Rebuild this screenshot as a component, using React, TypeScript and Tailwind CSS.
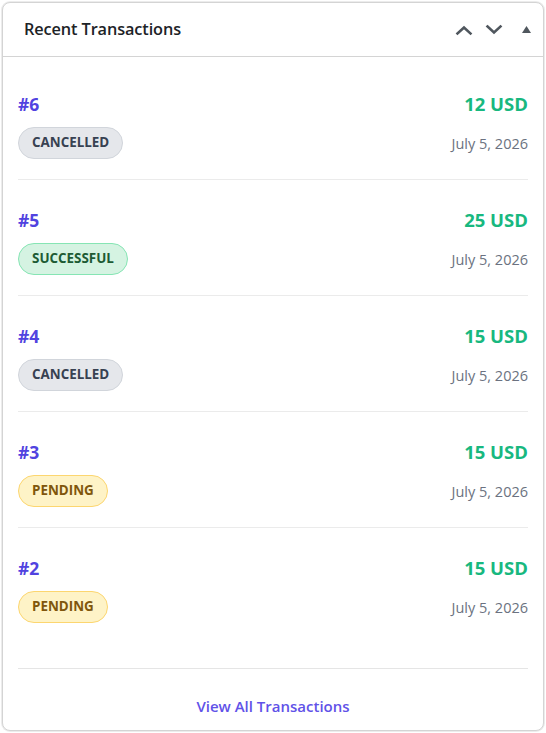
import React from 'react';

type Status = 'CANCELLED' | 'SUCCESSFUL' | 'PENDING';

interface Txn {
  id: number;
  amount: number;
  status: Status;
  date: string;
}

const txns: Txn[] = [
  { id: 6, amount: 12, status: 'CANCELLED', date: 'July 5, 2026' },
  { id: 5, amount: 25, status: 'SUCCESSFUL', date: 'July 5, 2026' },
  { id: 4, amount: 15, status: 'CANCELLED', date: 'July 5, 2026' },
  { id: 3, amount: 15, status: 'PENDING', date: 'July 5, 2026' },
  { id: 2, amount: 15, status: 'PENDING', date: 'July 5, 2026' },
];

const badgeClass: Record<Status, string> = {
  CANCELLED: 'bg-[#e5e7eb] border-[#d1d5db] text-[#374151]',
  SUCCESSFUL: 'bg-[#d5f3e2] border-[#86e5b4] text-[#1d5b34]',
  PENDING: 'bg-[#fef3c7] border-[#fcd670] text-[#80560c]',
};

function StatusBadge({ status }: { status: Status }) {
  return (
    <span
      className={`inline-flex items-center h-[32px] px-[13px] rounded-full border text-[13.4px] font-bold leading-none ${badgeClass[status]}`}
    >
      {status}
    </span>
  );
}

function Chevron({ up }: { up?: boolean }) {
  return (
    <svg width="18" height="12" viewBox="0 0 18 12" fill="none" stroke="#50575e" strokeWidth="2.6" strokeLinecap="square">
      {up ? <path d="M2.5 9.5 9 3.5l6.5 6" /> : <path d="M2.5 2.5 9 8.5l6.5-6" />}
    </svg>
  );
}

export default function App() {
  return (
    <div className="p-[2px] bg-white" style={{ fontFamily: '"Open Sans", "Noto Sans", sans-serif' }}>
      <div className="h-[729px] flex flex-col rounded-lg border border-[#d4d4d4] bg-white shadow-[0_0_0_1px_#ececec]">
        {/* header */}
        <div className="h-[54px] flex items-center justify-between pl-[21px] pr-[10px] border-b border-[#d4d4d4]">
          <h2 className="text-[16.3px] font-semibold text-[#1d2327] tracking-[-0.1px]">Recent Transactions</h2>
          <div className="flex items-center">
            <button className="w-[30px] flex justify-center"><Chevron up /></button>
            <button className="w-[30px] flex justify-center"><Chevron /></button>
            <button className="w-[24px] flex justify-end pr-[2px]">
              <svg width="9" height="7" viewBox="0 0 9 7"><path d="M4.5 0 9 7H0z" fill="#50575e" /></svg>
            </button>
          </div>
        </div>

        {/* list */}
        <div className="flex-1 flex flex-col px-[15px] pt-[7px]">
          {txns.map((t, i) => (
            <div
              key={t.id}
              className={`flex justify-between pt-[28px] pb-[20px] ${i < txns.length - 1 ? 'border-b border-[#ebebeb]' : ''}`}
            >
              <div className="flex flex-col items-start gap-[11px]">
                <span className="text-[17.5px] leading-[24px] font-bold text-[#5143e0]">#{t.id}</span>
                <StatusBadge status={t.status} />
              </div>
              <div className="flex flex-col items-end">
                <span className="text-[18.5px] leading-[24px] font-bold text-[#18b87f]">{t.amount} USD</span>
                <span className="mt-[18px] text-[14.5px] leading-[20px] text-[#6b7280]">{t.date}</span>
              </div>
            </div>
          ))}
          <div className="flex-1" />
          <div className="border-t border-[#e5e5e5] h-[62px] flex justify-center pt-[26px]">
            <a className="text-[15px] leading-[22px] font-semibold text-[#6152e8]">View All Transactions</a>
          </div>
        </div>
      </div>
    </div>
  );
}
